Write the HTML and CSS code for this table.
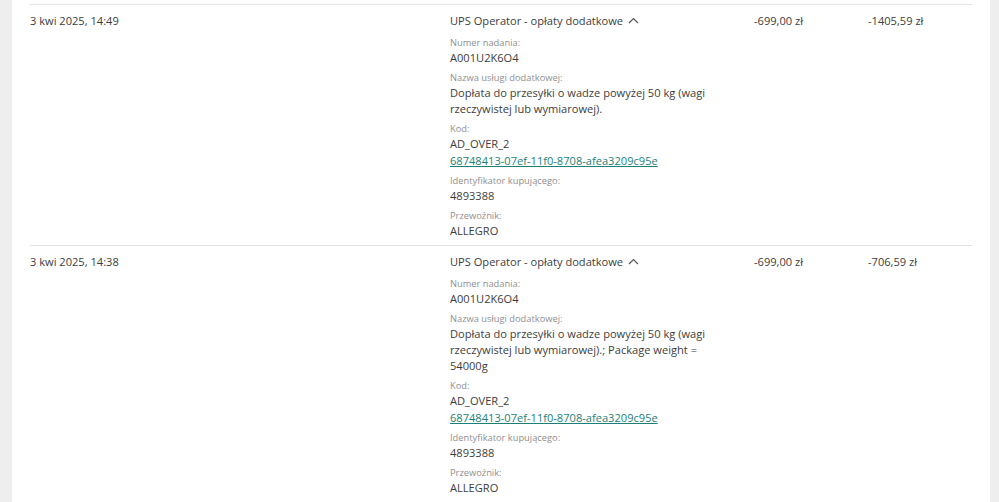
FILE: index.html
```html
<!DOCTYPE html>
<html lang="pl">
<head>
  <meta charset="UTF-8">
  <title>Operacje</title>
  <link rel="stylesheet" href="styles.css">
</head>
<body>
  <div class="panel">
    <div class="operacja">
      <div class="data">3 kwi 2025, 14:49</div>
      <div class="szczegoly">
        <div class="tytul">UPS Operator - opłaty dodatkowe
          <svg class="strzalka" width="11" height="7" viewBox="0 0 11 7"><path d="M1 6 L5.5 1.5 L10 6" fill="none" stroke="#555" stroke-width="1.2"/></svg>
        </div>
        <div class="pole">
          <div class="etykieta">Numer nadania:</div>
          <div class="wartosc">A001U2K6O4</div>
        </div>
        <div class="pole">
          <div class="etykieta">Nazwa usługi dodatkowej:</div>
          <div class="wartosc">Dopłata do przesyłki o wadze powyżej 50 kg (wagi rzeczywistej lub wymiarowej).</div>
        </div>
        <div class="pole">
          <div class="etykieta">Kod:</div>
          <div class="wartosc">AD_OVER_2</div>
          <a class="link" href="#">68748413-07ef-11f0-8708-afea3209c95e</a>
        </div>
        <div class="pole">
          <div class="etykieta">Identyfikator kupującego:</div>
          <div class="wartosc">4893388</div>
        </div>
        <div class="pole">
          <div class="etykieta">Przewoźnik:</div>
          <div class="wartosc">ALLEGRO</div>
        </div>
      </div>
      <div class="kwota">-699,00 zł</div>
      <div class="saldo">-1405,59 zł</div>
    </div>

    <div class="operacja">
      <div class="data">3 kwi 2025, 14:38</div>
      <div class="szczegoly">
        <div class="tytul">UPS Operator - opłaty dodatkowe
          <svg class="strzalka" width="11" height="7" viewBox="0 0 11 7"><path d="M1 6 L5.5 1.5 L10 6" fill="none" stroke="#555" stroke-width="1.2"/></svg>
        </div>
        <div class="pole">
          <div class="etykieta">Numer nadania:</div>
          <div class="wartosc">A001U2K6O4</div>
        </div>
        <div class="pole">
          <div class="etykieta">Nazwa usługi dodatkowej:</div>
          <div class="wartosc">Dopłata do przesyłki o wadze powyżej 50 kg (wagi rzeczywistej lub wymiarowej).; Package weight = 54000g</div>
        </div>
        <div class="pole">
          <div class="etykieta">Kod:</div>
          <div class="wartosc">AD_OVER_2</div>
          <a class="link" href="#">68748413-07ef-11f0-8708-afea3209c95e</a>
        </div>
        <div class="pole">
          <div class="etykieta">Identyfikator kupującego:</div>
          <div class="wartosc">4893388</div>
        </div>
        <div class="pole">
          <div class="etykieta">Przewoźnik:</div>
          <div class="wartosc">ALLEGRO</div>
        </div>
      </div>
      <div class="kwota">-699,00 zł</div>
      <div class="saldo">-706,59 zł</div>
    </div>
  </div>
</body>
</html>
```

FILE: styles.css
```css
body {
  margin: 0;
  background-color: #eeeeee;
  font-family: "Open Sans", Arial, sans-serif;
  font-size: 11.1px;
  color: #3d3d3d;
}
.panel {
  margin: 0 9px 0 12px;
  background: white;
  padding: 4px 18px 0 18px;
  min-height: 498px;
}
.operacja {
  display: grid;
  grid-template-columns: 420px 304px 114px 102px;
  border-top: 1px solid #e3e3e3;
  padding: 7px 0 6px 0;
  line-height: 17px;
}
.tytul {
  margin-bottom: 7px;
}
.strzalka {
  margin-left: 2px;
  vertical-align: 1px;
}
.szczegoly {
  padding-right: 34px;
}
.pole {
  margin-bottom: 5px;
}
.pole:last-child {
  margin-bottom: 0;
}
.etykieta {
  font-size: 9.3px;
  line-height: 14px;
  color: #8f8f8f;
}
.wartosc {
  line-height: 16px;
}
.link {
  display: block;
  color: #1c7f79;
  text-decoration: underline;
}
```
